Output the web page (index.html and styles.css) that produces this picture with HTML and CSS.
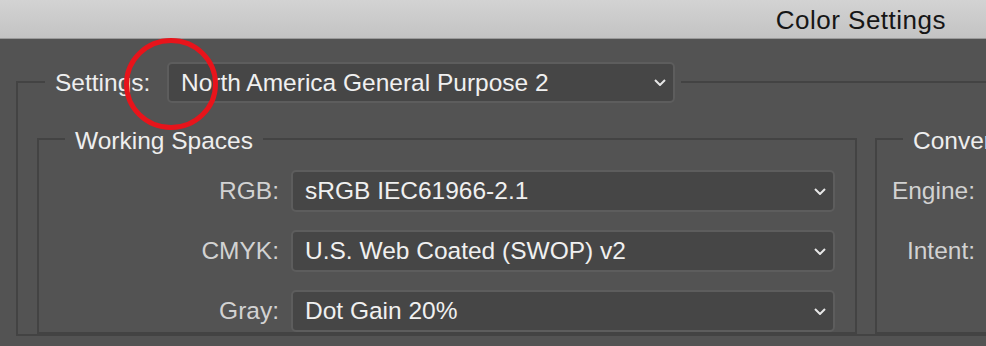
FILE: index.html
```html
<!DOCTYPE html>
<html lang="en">
<head>
    <meta charset="UTF-8">
    <meta name="viewport" content="width=device-width, initial-scale=1.0">
    <title>Color Settings</title>
    <link rel="stylesheet" href="styles.css">
</head>
<body>
    <div class="titlebar">
        <span class="title">Color Settings</span>
    </div>

    <main class="dialog">
        <fieldset class="group outer">
            <legend class="settings-legend">
                <span class="settings-label">Settings:</span>
                <div class="select settings-select">
                    <span>North America General Purpose 2</span>
                    <svg class="chevron" viewBox="0 0 12 7"><path d="M1 1l5 5 5-5"/></svg>
                </div>
            </legend>

            <div class="columns">
                <fieldset class="group working">
                    <legend>Working Spaces</legend>
                    <div class="field-grid">
                        <label>RGB:</label>
                        <div class="select">
                            <span>sRGB IEC61966-2.1</span>
                            <svg class="chevron" viewBox="0 0 12 7"><path d="M1 1l5 5 5-5"/></svg>
                        </div>

                        <label>CMYK:</label>
                        <div class="select">
                            <span>U.S. Web Coated (SWOP) v2</span>
                            <svg class="chevron" viewBox="0 0 12 7"><path d="M1 1l5 5 5-5"/></svg>
                        </div>

                        <label>Gray:</label>
                        <div class="select">
                            <span>Dot Gain 20%</span>
                            <svg class="chevron" viewBox="0 0 12 7"><path d="M1 1l5 5 5-5"/></svg>
                        </div>
                    </div>
                </fieldset>

                <fieldset class="group conversion">
                    <legend>Conver</legend>
                    <div class="label-stack">
                        <label>Engine:</label>
                        <label>Intent:</label>
                    </div>
                </fieldset>
            </div>
        </fieldset>

        <!-- red annotation ring -->
        <svg class="ring" viewBox="0 0 96 94"><ellipse cx="48" cy="47" rx="44.5" ry="43.5"/></svg>
    </main>
</body>
</html>
```

FILE: styles.css
```css
body {
    margin: 0;
    width: 986px;
    height: 346px;
    overflow: hidden;
    background-color: #535353;
    font-family: "Liberation Sans", Arial, sans-serif;
    font-size: 24.5px;
    color: #ececec;
}
.titlebar {
    height: 38px;
    display: flex;
    justify-content: flex-end;
    align-items: center;
    padding-right: 40px;
    background: linear-gradient(#d3d3d3, #c3c3c3);
    border-bottom: 1px solid #9a9a9a;
}
.title {
    font-size: 26px;
    color: #161616;
    letter-spacing: 0.5px;
    margin-top: 2px;
}
.dialog {
    position: relative;
    padding: 22px 0 0 16px;
}
.group {
    margin: 0;
    border: 2px solid #434343;
    min-width: 0;
}
.group legend {
    padding: 4px 10px 0;
    line-height: 28px;
    color: #eeeeee;
}
.outer {
    width: 1100px;
    padding: 20px 0 0 19px;
}
.outer .settings-legend {
    display: flex;
    align-items: center;
    margin-left: 8px;
    padding: 1px 6px 0 10px;
}
.settings-label {
    width: 100px;
    margin-right: 12px;
}
.select {
    box-sizing: border-box;
    height: 42px;
    display: flex;
    align-items: center;
    justify-content: space-between;
    padding: 0 7px 0 12px;
    background-color: #464646;
    border: 2px solid #5d5d5d;
    border-radius: 5px;
    color: #f0f0f0;
    white-space: nowrap;
    overflow: hidden;
}
.settings-select {
    width: 508px;
    height: 41px;
}
.chevron {
    width: 12px;
    height: 7px;
    flex: none;
    fill: none;
    stroke: #e6e6e6;
    stroke-width: 2;
}
.columns {
    display: flex;
    gap: 18px;
}
.working {
    flex: none;
    box-sizing: border-box;
    width: 820px;
    padding: 15px 18px 0 19px;
}
.working legend {
    margin-left: 7px;
}
.conversion {
    flex: none;
    width: 200px;
    padding: 15px 0 0 16px;
}
.conversion legend {
    margin-left: 10px;
    padding-right: 0;
}
.field-grid {
    display: grid;
    grid-template-columns: 221px 544px;
    column-gap: 12px;
    row-gap: 18px;
    align-items: center;
}
.field-grid label {
    text-align: right;
    color: #d2d2d2;
}
.label-stack {
    width: 82px;
    display: flex;
    flex-direction: column;
    align-items: flex-end;
    gap: 18px;
}
.label-stack label {
    height: 42px;
    line-height: 42px;
    color: #d2d2d2;
}
.ring {
    position: absolute;
    left: 123px;
    top: -2px;
    width: 96px;
    height: 94px;
    fill: none;
    stroke: #e8141b;
    stroke-width: 5;
}
```
